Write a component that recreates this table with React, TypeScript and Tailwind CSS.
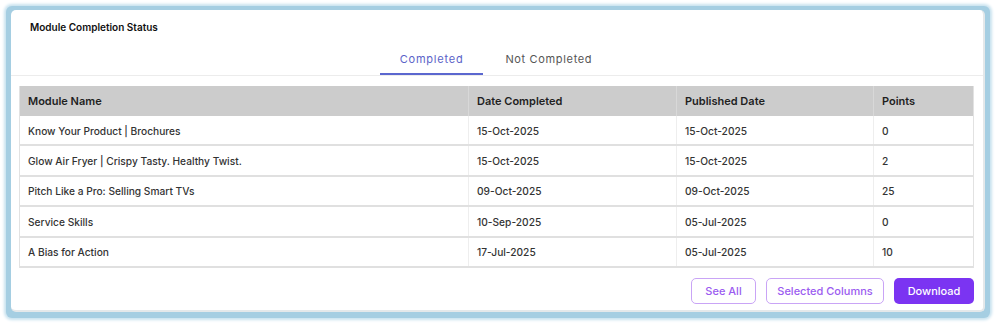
const rows = [
  { name: "Know Your Product | Brochures", completed: "15-Oct-2025", published: "15-Oct-2025", points: "0" },
  { name: "Glow Air Fryer | Crispy Tasty. Healthy Twist.", completed: "15-Oct-2025", published: "15-Oct-2025", points: "2" },
  { name: "Pitch Like a Pro: Selling Smart TVs", completed: "09-Oct-2025", published: "09-Oct-2025", points: "25" },
  { name: "Service Skills", completed: "10-Sep-2025", published: "05-Jul-2025", points: "0" },
  { name: "A Bias for Action", completed: "17-Jul-2025", published: "05-Jul-2025", points: "10" },
];

const App = () => {
  return (
    <div className="w-[997px] h-[325px] bg-white pt-[6px] pl-[6px] font-['Inter',sans-serif]">
      {/* Blue frame */}
      <div className="w-[984px] h-[312px] rounded-[6px] bg-[#a5cee2] pt-[4px] pl-[5px] pr-[5px] pb-[6px] shadow-[0_0_3px_2px_#c8e2ef]">
        <div className="w-[974px] h-[302px] rounded-[5px] bg-white border-r-2 border-b-2 border-[#e4e8ea] flex flex-col">
          {/* Title */}
          <div className="pt-[10px] pl-[19px] text-[10px] leading-[14px] font-semibold text-[#111]">
            Module Completion Status
          </div>

          {/* Tabs */}
          <div className="mt-[10px] flex justify-center border-b border-[#ececec]">
            <button className="px-[20px] pt-[7px] pb-[6px] border-b-2 border-[#5b67cf] text-[11px] leading-[16px] tracking-[0.07em] text-[#5b63c8]">
              Completed
            </button>
            <button className="px-[22px] pt-[7px] pb-[6px] border-b-2 border-transparent text-[11px] leading-[16px] tracking-[0.06em] text-[#555]">
              Not Completed
            </button>
          </div>

          {/* Table */}
          <div className="mt-[10px] ml-[8px] mr-[9px] border-l border-r border-[#e2e2e2]">
            <div className="grid grid-cols-[449px_208px_197px_1fr] h-[30px] bg-[#cccccc] text-[11px] font-semibold text-[#1f1f1f]">
              {["Module Name", "Date Completed", "Published Date", "Points"].map((h, i) => (
                <div
                  key={h}
                  className={`flex items-center pl-[8px] ${i < 3 ? "border-r border-[#d8d8d8]" : ""}`}
                >
                  {h}
                </div>
              ))}
            </div>
            {rows.map((r) => (
              <div
                key={r.name}
                className="grid grid-cols-[449px_208px_197px_1fr] h-[30.4px] border-b-2 border-[#e0e0e0] text-[10.2px] font-medium text-[#333]"
              >
                <div className="flex items-center pl-[8px] pt-[2px] border-r border-[#eeeeee]">{r.name}</div>
                <div className="flex items-center pl-[8px] pt-[2px] border-r border-[#eeeeee]">{r.completed}</div>
                <div className="flex items-center pl-[8px] pt-[2px] border-r border-[#eeeeee]">{r.published}</div>
                <div className="flex items-center pl-[8px] pt-[2px]">{r.points}</div>
              </div>
            ))}
          </div>

          {/* Actions */}
          <div className="mt-[10px] mr-[9px] flex justify-end gap-[10px]">
            <button className="w-[65px] h-[26px] rounded-[5px] border border-[#c9a4f6] text-[11px] font-medium text-[#9b5cf0]">
              See All
            </button>
            <button className="w-[118px] h-[26px] rounded-[5px] border border-[#c9a4f6] text-[11px] font-medium text-[#9b5cf0]">
              Selected Columns
            </button>
            <button className="w-[80px] h-[26px] rounded-[5px] bg-[#7b34f2] text-[11px] font-medium text-white">
              Download
            </button>
          </div>
        </div>
      </div>
    </div>
  );
};

export default App;
